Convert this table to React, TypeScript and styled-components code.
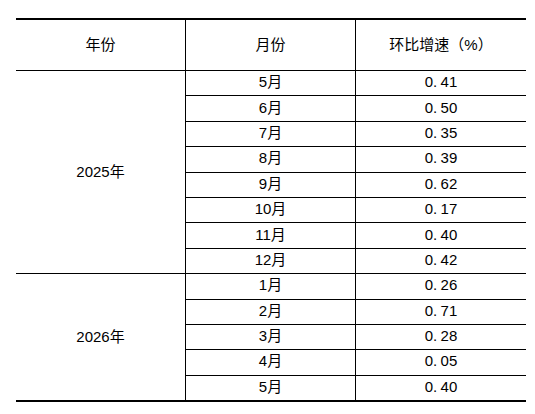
import React from "react";
import styled, { createGlobalStyle } from "styled-components";

const GlobalStyle = createGlobalStyle`
  html, body {
    margin: 0;
    padding: 0;
    background: #ffffff;
  }
  body {
    font-family: "Liberation Sans", "Noto Sans CJK SC", sans-serif;
    color: #000;
  }
`;

type YearGroup = {
  year: string;
  rows: { month: string; value: string }[];
};

const data: YearGroup[] = [
  {
    year: "2025年",
    rows: [
      { month: "5月", value: "0.41" },
      { month: "6月", value: "0.50" },
      { month: "7月", value: "0.35" },
      { month: "8月", value: "0.39" },
      { month: "9月", value: "0.62" },
      { month: "10月", value: "0.17" },
      { month: "11月", value: "0.40" },
      { month: "12月", value: "0.42" },
    ],
  },
  {
    year: "2026年",
    rows: [
      { month: "1月", value: "0.26" },
      { month: "2月", value: "0.71" },
      { month: "3月", value: "0.28" },
      { month: "4月", value: "0.05" },
      { month: "5月", value: "0.40" },
    ],
  },
];

const Page = styled.div`
  padding: 18px 9px 0 16px;
`;

const Table = styled.table`
  width: 510px;
  border-collapse: separate;
  border-spacing: 0;
  border-top: 2px solid #000;
  border-bottom: 2px solid #000;
  table-layout: fixed;
  font-size: 15px;
`;

const HeadCell = styled.th<{ $divider?: boolean }>`
  height: 46px;
  padding: 0 0 4px;
  font-weight: normal;
  text-align: center;
  vertical-align: middle;
  border-bottom: 1px solid #000;
  border-left: ${(p) => (p.$divider ? "1px solid #000" : "none")};
`;

const Cell = styled.td<{ $divider?: boolean; $last?: boolean }>`
  height: 21.4px;
  padding: 0 0 3px;
  text-align: center;
  vertical-align: middle;
  line-height: 1;
  border-bottom: ${(p) => (p.$last ? "none" : "1px solid #000")};
  border-left: ${(p) => (p.$divider ? "1px solid #000" : "none")};
`;

const YearCell = styled(Cell)`
  padding-bottom: 1px;
`;

const Dot = styled.span`
  display: inline-block;
  width: 0.5em;
  text-align: left;
`;

const Value = ({ v }: { v: string }) => {
  const [a, b] = v.split(".");
  return (
    <>
      {a}
      <Dot>.</Dot>
      {b}
    </>
  );
};

export default function App() {
  return (
    <>
      <GlobalStyle />
      <Page>
        <Table>
          <colgroup>
            <col style={{ width: 169 }} />
            <col style={{ width: 170 }} />
            <col style={{ width: 171 }} />
          </colgroup>
          <thead>
            <tr>
              <HeadCell>年份</HeadCell>
              <HeadCell $divider>月份</HeadCell>
              <HeadCell $divider>环比增速（%）</HeadCell>
            </tr>
          </thead>
          <tbody>
            {data.map((g, gi) =>
              g.rows.map((r, ri) => {
                const last = gi === data.length - 1 && ri === g.rows.length - 1;
                return (
                  <tr key={g.year + r.month}>
                    {ri === 0 && (
                      <YearCell rowSpan={g.rows.length} $last={gi === data.length - 1}>
                        {g.year}
                      </YearCell>
                    )}
                    <Cell $divider $last={last}>
                      {r.month}
                    </Cell>
                    <Cell $divider $last={last}>
                      <Value v={r.value} />
                    </Cell>
                  </tr>
                );
              })
            )}
          </tbody>
        </Table>
      </Page>
    </>
  );
}
